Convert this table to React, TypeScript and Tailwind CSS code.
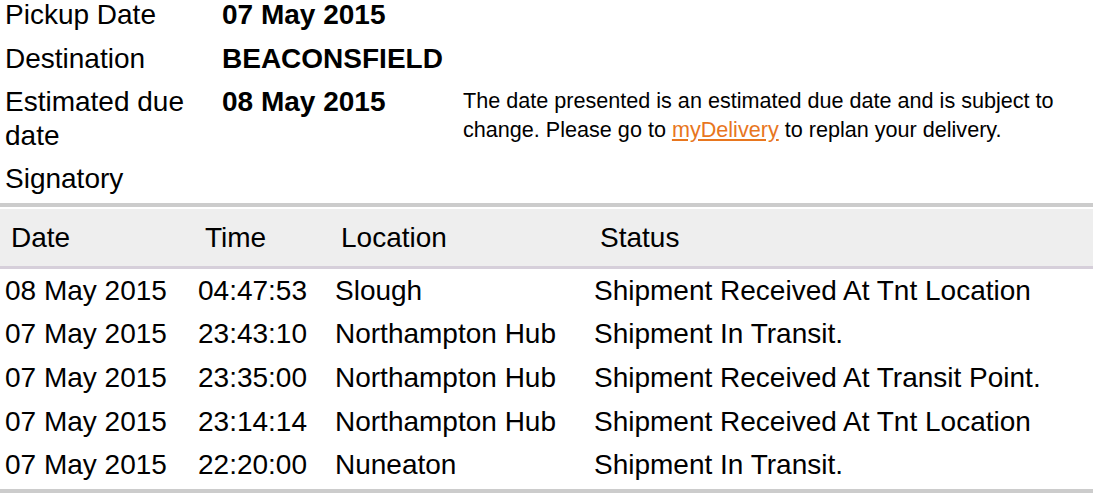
import React from "react";

const rows = [
  ["08 May 2015", "04:47:53", "Slough", "Shipment Received At Tnt Location"],
  ["07 May 2015", "23:43:10", "Northampton Hub", "Shipment In Transit."],
  ["07 May 2015", "23:35:00", "Northampton Hub", "Shipment Received At Transit Point."],
  ["07 May 2015", "23:14:14", "Northampton Hub", "Shipment Received At Tnt Location"],
  ["07 May 2015", "22:20:00", "Nuneaton", "Shipment In Transit."],
];

export default function App() {
  return (
    <div className="w-[1093px] h-[493px] overflow-hidden bg-white text-black font-['Liberation_Sans',Arial,sans-serif]">
      <div className="-mt-[2px] text-[28px] leading-[34px]">
        <div className="flex py-[5px] pt-0">
          <div className="w-[222px] pl-[5px]">Pickup Date</div>
          <div className="font-bold">07 May 2015</div>
        </div>
        <div className="flex py-[4.5px]">
          <div className="w-[222px] pl-[5px]">Destination</div>
          <div className="font-bold">BEACONSFIELD</div>
        </div>
        <div className="flex py-[4.5px]">
          <div className="w-[222px] pl-[5px] pr-[20px]">Estimated due date</div>
          <div className="w-[241px] font-bold">08 May 2015</div>
          <div className="text-[21.6px] leading-[29px] pt-[1px] whitespace-nowrap">
            The date presented is an estimated due date and is subject to
            <br />
            change. Please go to{" "}
            <a className="text-[#e8761e] underline">myDelivery</a> to replan your delivery.
          </div>
        </div>
        <div className="flex py-[4.5px]">
          <div className="w-[222px] pl-[5px]">Signatory</div>
        </div>
      </div>

      <div className="mt-[3px] border-t-[4px] border-[#cccccc] pt-[2px]">
        <div className="flex h-[57px] items-center bg-[#eeeeee] text-[28px] border-b-[3px] border-[#d6cfda] box-content">
          <div className="w-[193px] pl-[11px]">Date</div>
          <div className="w-[137px] pl-[12px]">Time</div>
          <div className="w-[259px] pl-[11px]">Location</div>
          <div className="pl-[11px]">Status</div>
        </div>
        {rows.map((r, i) => (
          <div key={i} className="flex h-[43.6px] items-center text-[28px] whitespace-nowrap">
            <div className="w-[193px] pl-[5px]">{r[0]}</div>
            <div className="w-[137px] pl-[5px]">{r[1]}</div>
            <div className="w-[259px] pl-[5px]">{r[2]}</div>
            <div className="pl-[5px]">{r[3]}</div>
          </div>
        ))}
        <div className="mt-[2px] h-[4px] bg-[#cccccc]" />
      </div>
    </div>
  );
}
